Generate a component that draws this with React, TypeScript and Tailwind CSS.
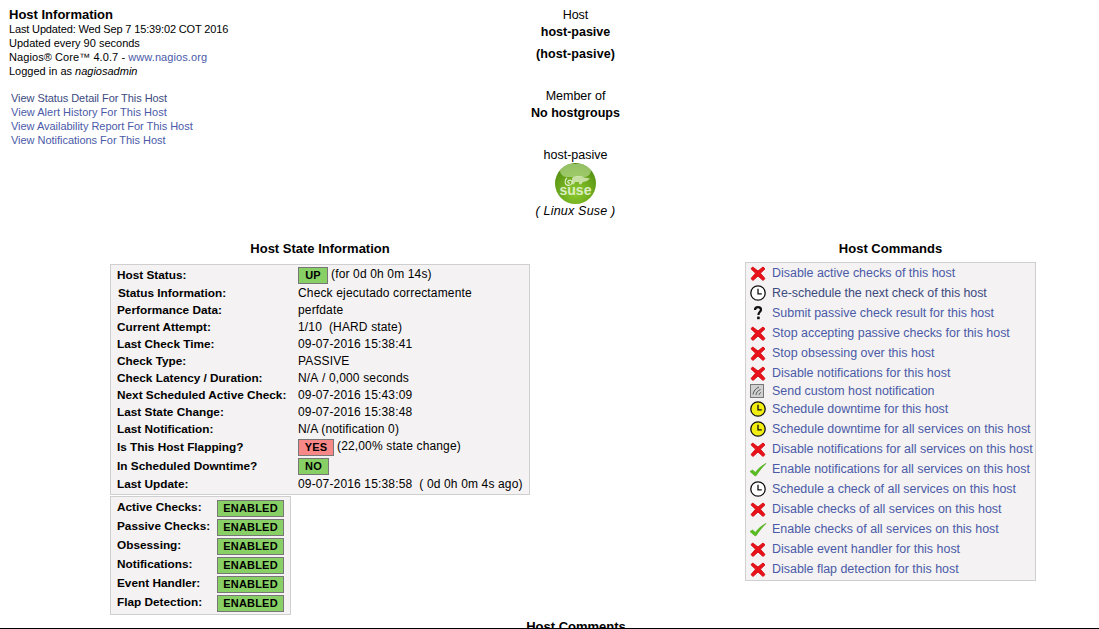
const Cross = () => (
  <svg width="18" height="18" viewBox="0 0 18 18" className="block">
    <path d="M3.6 3 L9 7 L14 3 L16 4.8 L11.4 9.2 L16 14.6 L14 16.4 L9 12 L4 16.4 L2 14.6 L6.6 9.2 L2 4.8 Z" fill="#e8121a" stroke="#d81018" strokeWidth="1" strokeLinejoin="round" />
  </svg>
);
const Clock = ({ fill }: { fill: string }) => (
  <svg width="18" height="18" viewBox="0 0 18 18" className="block">
    <circle cx="9" cy="9" r="7.2" fill={fill} stroke="#111" strokeWidth="1.3" />
    <path d="M9 4.8 V9.8 H12.8" fill="none" stroke="#111" strokeWidth="1.3" />
  </svg>
);
const Question = () => (
  <svg width="18" height="18" viewBox="0 0 18 18" className="block">
    <path d="M6 6 C6 4 7.4 3.2 9 3.2 C10.8 3.2 12 4.2 12 5.8 C12 7.8 9.4 8 9.4 11" fill="none" stroke="#111" strokeWidth="2.2" />
    <rect x="8.1" y="12.6" width="2.6" height="2.6" fill="#111" />
  </svg>
);
const Note = () => (
  <svg width="18" height="18" viewBox="0 0 18 18" className="block">
    <rect x="1.5" y="2.5" width="13" height="13" fill="#d0d0d0" stroke="#777" />
    <path d="M4 12.5 C4.5 9 6.5 6.5 10 5 M7 13 C7.2 10.5 8.5 8.8 11.5 7.5 M10 13 C10 12 10.6 11 12 10.5" fill="none" stroke="#555" strokeWidth="1" />
  </svg>
);
const Check = () => (
  <svg width="18" height="18" viewBox="0 0 18 18" className="block">
    <path d="M1 11.5 L3.6 10 L6.4 12.4 C9.4 8.6 12.5 5.8 17 3.4 C13 7.4 10 11 7 15.8 L5.6 15.6 Z" fill="#58c01c" stroke="#46a012" strokeWidth="0.6" strokeLinejoin="round" />
  </svg>
);
const Suse = () => (
  <div className="relative w-[41px] h-[41px] rounded-full overflow-hidden bg-[radial-gradient(circle_at_50%_72%,#8ccb2e_0%,#649f18_58%,#3c770a_100%)]">
    <div className="absolute left-[5px] top-[1px] w-[31px] h-[13px] rounded-full bg-[#b4d98a] opacity-70" />
    <svg width="41" height="41" viewBox="0 0 41 41" className="absolute left-0 top-0">
      <path d="M17 15 C20 12.5 26 12.5 29 14.5 L35 15.5 L32 18 L28 19 L26 21.5 L24 21 L24 19 L20 19 L19 21.5 L17 21 Z" fill="#d6e9b8" opacity="0.85" />
      <path d="M15 20 C13 20.5 12 18.5 13.5 17.5 C15.5 16.5 17.5 18 17 20 C16.5 22.5 13 23 11 21.5 C9.5 20 10 16.5 12 15" fill="none" stroke="#e6f2d2" strokeWidth="1.1" />
    </svg>
    <span className="absolute left-0 right-0 top-[20px] text-center text-[14px] leading-[14px] text-[#dcedc4] font-bold">suse</span>
  </div>
);

const Badge = ({ text, w, bad }: { text: string; w: string; bad?: boolean }) => (
  <span className={`${w} h-[17px] mt-[2px] inline-flex items-center justify-center border border-[#777] font-bold text-[11px] tracking-[0.2px] leading-none ${bad ? "bg-[#f88888]" : "bg-[#88d066]"}`}>{text}</span>
);

const rows: { label: string; value: React.ReactNode; h: string; pl?: string }[] = [
  { label: "Host Status:", h: "h-[19px]", value: <span className="flex items-center gap-[3px]"><Badge text="UP" w="w-[30px]" /><span className="-mt-[2px]">(for 0d 0h 0m 14s)</span></span> },
  { label: "Status Information:", h: "h-[17px]", pl: "pl-[7px]", value: "Check ejecutado correctamente" },
  { label: "Performance Data:", h: "h-[17px]", value: "perfdate" },
  { label: "Current Attempt:", h: "h-[17px]", value: "1/10\u00a0 (HARD state)" },
  { label: "Last Check Time:", h: "h-[17px]", value: "09-07-2016 15:38:41" },
  { label: "Check Type:", h: "h-[17px]", value: "PASSIVE" },
  { label: "Check Latency / Duration:", h: "h-[17px]", value: "N/A\u00a0/\u00a00,000 seconds" },
  { label: "Next Scheduled Active Check:", h: "h-[17px]", value: "09-07-2016 15:43:09" },
  { label: "Last State Change:", h: "h-[17px]", value: "09-07-2016 15:38:48" },
  { label: "Last Notification:", h: "h-[17px]", value: "N/A (notification 0)" },
  { label: "Is This Host Flapping?", h: "h-[19px]", value: <span className="flex items-center gap-[3px]"><Badge text="YES" w="w-[36px]" bad /><span className="-mt-[2px]">(22,00% state change)</span></span> },
  { label: "In Scheduled Downtime?", h: "h-[19px]", value: <span className="flex"><Badge text="NO" w="w-[31px]" /></span> },
  { label: "Last Update:", h: "h-[18px]", value: "09-07-2016 15:38:58\u00a0 ( 0d 0h 0m 4s ago)" },
];

const checks = ["Active Checks:", "Passive Checks:", "Obsessing:", "Notifications:", "Event Handler:", "Flap Detection:"];

type Cmd = { icon: React.ReactNode; text: string; h?: string; dark?: boolean };
const cmds: Cmd[] = [
  { icon: <Cross />, text: "Disable active checks of this host" },
  { icon: <Clock fill="#fff" />, text: "Re-schedule the next check of this host", dark: true },
  { icon: <Question />, text: "Submit passive check result for this host" },
  { icon: <Cross />, text: "Stop accepting passive checks for this host" },
  { icon: <Cross />, text: "Stop obsessing over this host" },
  { icon: <Cross />, text: "Disable notifications for this host" },
  { icon: <Note />, text: "Send custom host notification", h: "h-[16px]" },
  { icon: <Clock fill="#f2ee12" />, text: "Schedule downtime for this host" },
  { icon: <Clock fill="#f2ee12" />, text: "Schedule downtime for all services on this host" },
  { icon: <Cross />, text: "Disable notifications for all services on this host" },
  { icon: <Check />, text: "Enable notifications for all services on this host" },
  { icon: <Clock fill="#fff" />, text: "Schedule a check of all services on this host" },
  { icon: <Cross />, text: "Disable checks of all services on this host" },
  { icon: <Check />, text: "Enable checks of all services on this host" },
  { icon: <Cross />, text: "Disable event handler for this host" },
  { icon: <Cross />, text: "Disable flap detection for this host" },
];

const links = [
  ["View Status Detail For This Host", "text-[#3c4a80] tracking-[-0.06px]"],
  ["View Alert History For This Host", "text-[#4a5aa8] tracking-[0.03px]"],
  ["View Availability Report For This Host", "text-[#4a5aa8] tracking-[-0.03px]"],
  ["View Notifications For This Host", "text-[#4a5aa8] tracking-[-0.03px]"],
];

export default function App() {
  return (
    <div className="h-[629px] w-[1099px] overflow-hidden bg-white text-black text-[12px] leading-[14px] font-['Liberation_Sans',Arial,sans-serif]">
      <div className="h-[628px] overflow-hidden">
        <div className="flex h-[231px]">
          <div className="w-[460px] pl-[9px] pt-[8px]">
            <div className="font-bold text-[13px] leading-[14px]">Host Information</div>
            <div className="text-[11px] leading-[14px] tracking-[-0.15px]">Last Updated: Wed Sep 7 15:39:02 COT 2016</div>
            <div className="text-[11px] leading-[14px]">Updated every 90 seconds</div>
            <div className="text-[11px] leading-[14px] tracking-[0.08px]">Nagios® Core™ 4.0.7 - <span className="text-[#4a5aa8]">www.nagios.org</span></div>
            <div className="text-[11px] leading-[14px]">Logged in as <i>nagiosadmin</i></div>
            <div className="pl-[2px] mt-[13px]">
              {links.map(([t, c]) => (
                <div key={t} className={`text-[11px] leading-[14px] ${c}`}>{t}</div>
              ))}
            </div>
          </div>
          <div className="w-[231px] flex flex-col items-center pt-[8px] text-[12.5px] leading-[14px]">
            <div>Host</div>
            <div className="font-bold mt-[3px]">host-pasive</div>
            <div className="font-bold mt-[8px] tracking-[0.1px]">(host-pasive)</div>
            <div className="mt-[28px]">Member of</div>
            <div className="font-bold mt-[3px]">No hostgroups</div>
            <div className="mt-[28px]">host-pasive</div>
            <div className="mt-[1px]"><Suse /></div>
            <div className="italic tracking-[0.2px]">( Linux Suse )</div>
          </div>
        </div>
        <div className="flex mt-[11px]">
          <div className="w-[640px] pl-[110px]">
            <div className="w-[420px] text-center font-bold text-[13px] leading-[14px]">Host State Information</div>
            <div className="w-[420px] h-[231px] mt-[8px] border border-[#cfcfcf] bg-[#f4f2f2] text-[12px] tracking-[0.15px]">
              {rows.map((r) => (
                <div key={r.label} className={`flex items-center ${r.h}`}>
                  <div className={`w-[187px] shrink-0 font-bold text-[11.8px] tracking-normal ${r.pl ?? "pl-[6px]"}`}>{r.label}</div>
                  <div>{r.value}</div>
                </div>
              ))}
            </div>
            <div className="w-[181px] h-[119px] mt-[1px] border border-[#cfcfcf] bg-[#f4f2f2] pt-[1px] pl-[6px]">
              {checks.map((c) => (
                <div key={c} className="flex items-center h-[19px]">
                  <div className="w-[100px] shrink-0 font-bold text-[11.8px] -mt-[2px]">{c}</div>
                  <Badge text="ENABLED" w="w-[67px]" />
                </div>
              ))}
            </div>
          </div>
          <div className="w-[291px] ml-[105px]">
            <div className="text-center font-bold text-[13px] leading-[14px]">Host Commands</div>
            <div className="mt-[6px] h-[319px] border border-[#cfcfcf] bg-[#f4f2f2] text-[12.45px]">
              {cmds.map((c) => (
                <div key={c.text} className={`flex items-center ${c.h ?? "h-[20px]"}`}>
                  <div className="w-[26px] pl-[3px] shrink-0">{c.icon}</div>
                  <div className={`whitespace-nowrap ${c.dark ? "text-[#3c4a80] tracking-[-0.06px]" : "text-[#4a5aa8]"}`}>{c.text}</div>
                </div>
              ))}
            </div>
          </div>
        </div>
        <div className="text-center w-[1152px] font-bold text-[13px] leading-[14px] mt-[5px]">Host Comments</div>
      </div>
      <div className="h-px bg-black" />
    </div>
  );
}
